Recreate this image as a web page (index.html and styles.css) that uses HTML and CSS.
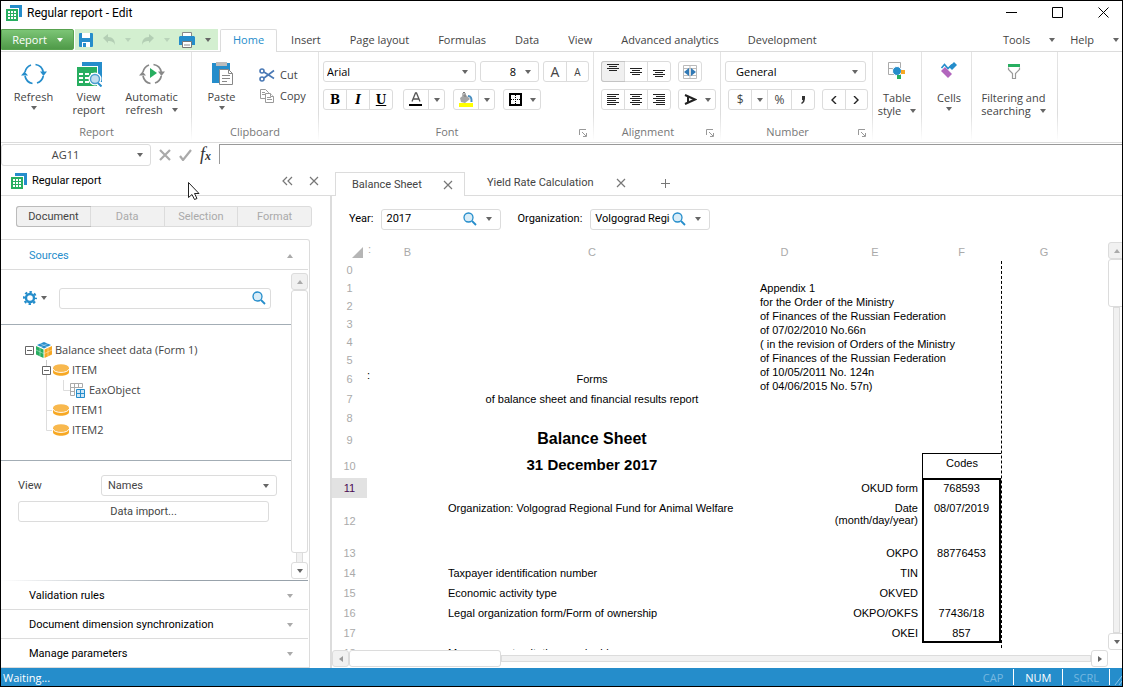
FILE: index.html
```html
<!DOCTYPE html>
<html lang="en">
<head>
<meta charset="utf-8">
<title>Regular report - Edit</title>
<link rel="stylesheet" href="styles.css">
</head>
<body>
<svg class="defs" aria-hidden="true">
  <symbol id="i-report" viewBox="0 0 16 16"><path d="M4 0h12v12h-3V3H4z" fill="#258dcb"/><path d="M0 4h12v12H0z" fill="#27ae60"/><path d="M2 6h2v2H2zM5 6h2v2H5zM8 6h2v2H8zM2 9h2v2H2zM5 9h2v2H5zM8 9h2v2H8zM2 12h2v2H2zM5 12h2v2H5zM8 12h2v2H8z" fill="#fff"/></symbol>
  <symbol id="i-x" viewBox="0 0 10 10"><path d="M1 1l8 8M9 1L1 9" stroke="currentColor" stroke-width="1.2" fill="none"/></symbol>
  <symbol id="i-lens" viewBox="0 0 14 14"><circle cx="5.5" cy="5.5" r="4.5" fill="#d9edf8" stroke="#258dcb" stroke-width="1.3"/><path d="M9 9l4 4" stroke="#258dcb" stroke-width="1.8"/></symbol>
  <symbol id="i-cycle" viewBox="0 0 26 24"><g fill="none" stroke="currentColor" stroke-width="1.7"><path d="M4 10a9.5 9.5 0 0 1 6-7M14.500 2.500A9.500 9.500 0 0 1 22.300 10M22.300 14A9.500 9.500 0 0 1 16 21M11.500 21.500A9.500 9.500 0 0 1 4 14"/></g><path d="M19 9.500h7l-3.500 4.500zM0 13.500h7L3.500 9.500z" fill="currentColor"/></symbol>
  <symbol id="i-disk" viewBox="0 0 16 12"><path d="M0 4v4c0 5 16 5 16 0V4z" fill="#f7a823"/><ellipse cx="8" cy="4" rx="8" ry="3.800" fill="#f8b84e"/><path d="M0 5c1 4.500 15 4.500 16 0" fill="none" stroke="#fff" stroke-width="1"/></symbol>
  <symbol id="i-launch" viewBox="0 0 8 8"><path d="M.5 6V.5H7M3 3l4 4M7.500 4v3.500H4" fill="none" stroke="#999"/></symbol>
</svg>

<div class="window">
  <header class="title">
    <svg class="i16"><use href="#i-report"/></svg>
    <h1>Regular report - Edit</h1>
    <div class="winbtns">
      <button aria-label="Minimize"><svg width="11" height="11"><path d="M0 5.500h11" stroke="#000"/></svg></button>
      <button aria-label="Maximize"><svg width="11" height="11"><path d="M.5.5h10v10H.5z" fill="none" stroke="#000"/></svg></button>
      <button aria-label="Close"><svg width="11" height="11"><path d="M.5.5l10 10M10.500.5l-10 10" stroke="#000"/></svg></button>
    </div>
  </header>

  <nav class="menu">
    <button class="file">Report <i class="caret"></i></button>
    <div class="quick">
      <button aria-label="Save"><svg width="14" height="14"><path d="M0 1q0-1 1-1h12q1 0 1 1v12q0 1-1 1H1q-1 0-1-1z" fill="#258dcb"/><path d="M3 0h8v5H3zM3 9h8v5H3z" fill="#fff"/><path d="M4 10h3v4H4z" fill="#258dcb"/></svg></button>
      <button aria-label="Undo"><svg width="13" height="12"><path d="M0 4l5-4v3c5 0 7 3 7 8-1-3-3-4-7-4v2z" fill="#b3ceb4"/></svg></button>
      <i class="caret pale"></i>
      <button aria-label="Redo"><svg width="13" height="12"><path d="M13 4L8 0v3c-5 0-7 3-7 8 1-3 3-4 7-4v2z" fill="#b3ceb4"/></svg></button>
      <i class="caret pale"></i>
      <button aria-label="Print"><svg width="16" height="16"><path d="M3.500.5h9v5h-9z" fill="#fff" stroke="#888"/><path d="M1 4h14l1 1v8H0V5z" fill="#258dcb"/><path d="M3.500 9.500h9v6h-9z" fill="#fff" stroke="#777"/><path d="M5 13h6" stroke="#888"/></svg></button>
      <i class="caret"></i>
    </div>
    <a class="tab on" href="#home">Home</a>
    <a class="tab" href="#insert">Insert</a>
    <a class="tab" href="#page">Page layout</a>
    <a class="tab" href="#formulas">Formulas</a>
    <a class="tab" href="#data">Data</a>
    <a class="tab" href="#view">View</a>
    <a class="tab" href="#analytics">Advanced analytics</a>
    <a class="tab" href="#development">Development</a>
    <div class="right"><button>Tools <i class="caret"></i></button><button>Help <i class="caret"></i></button></div>
  </nav>

  <div class="ribbon">
    <section class="group g-report">
      <div class="tools big-row">
        <button class="big b-refresh"><svg class="ico blue" width="26" height="24"><use href="#i-cycle"/></svg><span>Refresh</span><i class="caret"></i></button>
        <button class="big b-view"><svg class="ico" width="26" height="26"><path d="M6 1h20v20h-4V5H6z" fill="#258dcb"/><path d="M1 6h20v19H1z" fill="#27ae60"/><path d="M3 12h4v2H3zM9 12h4v2H9zM15 12h4v2h-4zM3 16h4v2H3zM9 16h4v2H9zM3 20h4v2H3zM9 20h4v2H9z" fill="#fff"/><circle cx="19" cy="18" r="5" fill="#c3def0" stroke="#fff" stroke-width="3"/><circle cx="19" cy="18" r="4.500" fill="#c3def0" stroke="#4a9dcf" stroke-width="1.400"/><path d="M22 22l3.500 3.500" stroke="#258dcb" stroke-width="2"/></svg><span>View<br>report</span></button>
        <button class="big b-auto"><svg class="ico gray" width="26" height="24"><use href="#i-cycle"/><path d="M11 7l7 5-7 5z" fill="#27ae60"/></svg><span>Automatic</span><span class="more">refresh<i class="caret"></i></span></button>
      </div>
      <h2>Report</h2>
    </section>

    <section class="group g-clip">
      <div class="tools big-row">
        <button class="big b-paste"><svg class="ico" width="22" height="24"><path d="M1 2h18v20H1z" fill="#258dcb"/><path d="M5 1h11v4H5z" fill="#bbb"/><path d="M8.500 8.500h9l4 4v11h-13z" fill="#fff" stroke="#888"/><path d="M17.500 8.500v4h4M11 14.500h8M11 17.500h8M11 20.500h5" fill="none" stroke="#888"/></svg><span>Paste</span><i class="caret"></i></button>
        <div class="stack">
          <button><svg width="16" height="14"><g fill="none" stroke="#4a79b5" stroke-width="1.600"><circle cx="3" cy="3" r="2"/><circle cx="3" cy="11" r="2"/><path d="M5 4l10 6.500M5 10l10-7.500"/></g></svg>Cut</button>
          <button><svg width="16" height="14"><g fill="#fff" stroke="#9a9a9a"><path d="M1.500.5h5l3 3v6h-8z"/><path d="M6.500 4.500h5l3 3v6h-8z"/><path d="M8 8.500h4M8 10.500h5M3 3.500h3M3 5.500h3M11.500 4.500v3h3"/></g></svg>Copy</button>
        </div>
      </div>
      <h2>Clipboard</h2>
    </section>

    <section class="group g-font dialog">
      <div class="tools lines">
        <div class="line">
          <span class="sel w-font"><select aria-label="Font"><option>Arial</option></select></span>
          <span class="sel w-size"><select aria-label="Font size"><option>8</option></select></span>
          <span class="btns"><button class="fa" aria-label="Increase font">A</button><button class="fa small" aria-label="Decrease font">A</button></span>
        </div>
        <div class="line">
          <span class="btns w-biu"><button class="serif"><b>B</b></button><button class="serif"><b><i>I</i></b></button><button class="serif"><b><u>U</u></b></button></span>
          <span class="btns w-drop"><button aria-label="Font color"><svg width="14" height="15"><path d="M3 9.500L6.500 1h1L11 9.500M4 7h6" fill="none" stroke="#555" stroke-width="1.300"/><path d="M0 12h13v2H0z" fill="#000"/></svg></button><button class="dd" aria-label="Color list"><i class="caret"></i></button></span>
          <span class="btns w-drop"><button aria-label="Fill color"><svg width="15" height="15"><path d="M1 6l5-4 5 5-5 4-4-1z" fill="#a5a5a5"/><path d="M4 4V1q1-2 2 0v4" fill="none" stroke="#777"/><path d="M9 4q4 0 3.500 6" fill="none" stroke="#4a8fc0" stroke-width="2"/><path d="M0 11h14v4H0z" fill="#ff0"/></svg></button><button class="dd" aria-label="Fill list"><i class="caret"></i></button></span>
          <span class="btns w-bord"><button aria-label="Borders"><svg width="13" height="13"><path d="M1 1h11v11H1z" fill="none" stroke="#000" stroke-width="2"/><path d="M6.500 2v9M2 6.500h9" stroke="#000" stroke-dasharray="1 1"/></svg><i class="caret"></i></button></span>
        </div>
      </div>
      <h2>Font</h2><button class="launch" aria-label="Font dialog"><svg width="8" height="8"><use href="#i-launch"/></svg></button>
    </section>

    <section class="group g-align dialog">
      <div class="tools lines">
        <div class="line">
          <span class="btns w-al"><button class="on up" aria-label="Top"><svg width="12" height="8"><path d="M0 .5h12M2 2.500h8M0 4.500h12M2 6.500h8" stroke="#222"/></svg></button><button aria-label="Middle"><svg width="12" height="8"><path d="M0 .5h12M2 2.500h8M0 4.500h12M2 6.500h8" stroke="#222"/></svg></button><button class="down" aria-label="Bottom"><svg width="12" height="8"><path d="M0 .5h12M2 2.500h8M0 4.500h12M2 6.500h8" stroke="#222"/></svg></button></span>
          <span class="btns w-merge"><button aria-label="Merge"><svg width="14" height="14"><path d="M.5.5h13v13H.5zM7 .5v13M.5 3.500h13M.5 10.500h13" fill="none" stroke="#bbb"/><path d="M6 3v8L1 7zM8 3v8l5-4z" fill="#3179b5"/></svg></button></span>
        </div>
        <div class="line">
          <span class="btns w-al"><button aria-label="Left"><svg width="13" height="11"><path d="M0 .5h12M0 2.500h9M0 4.500h12M0 6.500h9M0 8.500h12M0 10.500h9" stroke="#222"/></svg></button><button aria-label="Center"><svg width="12" height="11"><path d="M0 .5h12M2 2.500h8M0 4.500h12M2 6.500h8M0 8.500h12M2 10.500h8" stroke="#222"/></svg></button><button aria-label="Right"><svg width="12" height="11"><path d="M0 .5h12M3 2.500h9M0 4.500h12M3 6.500h9M0 8.500h12M3 10.500h9" stroke="#222"/></svg></button></span>
          <span class="btns w-bord"><button aria-label="Rotate text"><svg width="13" height="11"><path d="M1 1l10 4.500L1 10M4 2.500v6" fill="none" stroke="#222" stroke-width="2"/></svg><i class="caret"></i></button></span>
        </div>
      </div>
      <h2>Alignment</h2><button class="launch" aria-label="Alignment dialog"><svg width="8" height="8"><use href="#i-launch"/></svg></button>
    </section>

    <section class="group g-num dialog">
      <div class="tools lines">
        <div class="line"><span class="sel w-num"><select aria-label="Number format"><option>General</option></select></span></div>
        <div class="line ind">
          <span class="btns w-fmt"><button>$</button><button class="dd" aria-label="Currency list"><i class="caret"></i></button><button>%</button><button aria-label="Thousands separator"><svg width="6" height="8"><path d="M2 0h3v3q0 3-3 5l-1-1q2-1 2-3H2z" fill="#333"/></svg></button></span>
          <span class="btns w-dec"><button aria-label="Fewer decimals"><svg width="6" height="8"><path d="M5 0L1 4l4 4" fill="none" stroke="#222" stroke-width="1.400"/></svg></button><button aria-label="More decimals"><svg width="6" height="8"><path d="M1 0l4 4-4 4" fill="none" stroke="#222" stroke-width="1.400"/></svg></button></span>
        </div>
      </div>
      <h2>Number</h2><button class="launch" aria-label="Number dialog"><svg width="8" height="8"><use href="#i-launch"/></svg></button>
    </section>

    <section class="group g-table"><button class="big mid"><svg class="ico" width="18" height="18"><path d="M.5.5h12v12H.5zM.5 6.500h12" fill="none" stroke="#aaa"/><circle cx="9" cy="9" r="4.500" fill="#258dcb" stroke="#fff"/><path d="M13 8h4v4h-4z" fill="#f7a823"/><path d="M9 13h4v4H9z" fill="#27ae60"/></svg><span>Table</span><span class="more">style<i class="caret"></i></span></button></section>
    <section class="group g-cells"><button class="big mid"><svg class="ico" width="18" height="18"><path d="M1.500 6l3-3.500 3.500 4 4-4" fill="none" stroke="#258dcb" stroke-width="1.600"/><path d="M9 5l5-5 3 3-5 5z" fill="#258dcb"/><path d="M1 9l4-4 7 7-4 4z" fill="#b266bd"/></svg><span>Cells</span><i class="caret"></i></button></section>
    <section class="group g-filter"><button class="big mid"><svg class="ico" width="16" height="18"><path d="M2.500 5.500v2l4 4v5h3v-5l4-4v-2" fill="none" stroke="#999" stroke-width="1.200"/><path d="M2 2h12v3H2z" fill="#27ae60"/></svg><span>Filtering and</span><span class="more">searching<i class="caret"></i></span></button></section>
  </div>

  <div class="formula">
    <div class="namebox"><input aria-label="Cell name" value="AG11"><i class="caret"></i></div>
    <button aria-label="Cancel"><svg width="12" height="12"><path d="M1 1l10 10M11 1L1 11" stroke="#aaa" stroke-width="2.200"/></svg></button>
    <button aria-label="Accept"><svg width="13" height="12"><path d="M1 7l3 4 8-10" fill="none" stroke="#aaa" stroke-width="2.200"/></svg></button>
    <button class="fx" aria-label="Function"><i>f</i><sub>x</sub></button>
    <input class="expr" aria-label="Formula">
  </div>

  <main class="panes">
    <aside class="side">
      <header class="side-head"><svg class="i16"><use href="#i-report"/></svg><h2>Regular report</h2>
        <button aria-label="Collapse"><svg width="11" height="10"><path d="M5 1L1 5l4 4M10 1L6 5l4 4" fill="none" stroke="#777" stroke-width="1.200"/></svg></button>
        <button aria-label="Close panel"><svg width="10" height="10"><use href="#i-x"/></svg></button>
      </header>
      <div class="side-body">
        <div class="segs"><button class="on">Document</button><button disabled>Data</button><button disabled>Selection</button><button disabled>Format</button></div>
        <div class="box">
          <button class="acc open">Sources<i class="caret up"></i></button>
          <div class="scroll">
            <div class="content">
              <div class="find">
                <button class="gear" aria-label="Settings"><svg width="14" height="14"><circle cx="7" cy="7" r="4" fill="none" stroke="#258dcb" stroke-width="2.400"/><circle cx="7" cy="7" r="6" fill="none" stroke="#258dcb" stroke-width="2" stroke-dasharray="2.400 2.312" stroke-dashoffset="1.200"/></svg><i class="caret"></i></button>
                <div class="search"><input aria-label="Search sources"><svg width="14" height="14"><use href="#i-lens"/></svg></div>
              </div>
              <ul class="tree">
                <li><svg class="slot"><path d="M.5 6.500h8v8h-8zM2 10.500h5" fill="none" stroke="#666"/></svg><svg class="i16"><path d="M8 0l7 3-7 3.500L1 3z" fill="#258dcb"/><path d="M0 4l7.500 3.500V16L0 12.500z" fill="#27ae60"/><path d="M16 4L8.500 7.500V16l7.500-3.500z" fill="#f7a823"/><path d="M4 1.500l8 3.500M12 1.500L4 5M4 6v8M0 8l7.500 3.500M12 6v8M16 8l-7.500 3.500" stroke="#fff" stroke-width=".4"/></svg>Balance sheet data (Form 1)</li>
                <li class="l1"><svg class="slot"><path d="M4.500 0v6M4.500 15v5" stroke="#ccc"/><path d="M.5 6.500h8v8h-8zM2 10.500h5" fill="none" stroke="#666"/></svg><svg class="disk"><use href="#i-disk"/></svg>ITEM</li>
                <li class="l2"><svg class="slot"><path d="M4.500 0v10.500H11M-12.500 0v20" fill="none" stroke="#ddd"/></svg><svg class="i16"><path d="M.5 1.500h12v4H.5zM.5 5.500h4v8h-4zM4.500 1.500v4M8.500 1.500v4M.5 9.500h4" fill="none" stroke="#aaa"/><path d="M6.500 7.500h8v8h-8zM10.500 7.500v8M6.500 11.500h8" fill="#cfe6f5" stroke="#258dcb"/></svg>EaxObject</li>
                <li class="l1"><svg class="slot"><path d="M4.500 0v20M4.500 10.500H10" stroke="#ddd"/></svg><svg class="disk"><use href="#i-disk"/></svg>ITEM1</li>
                <li class="l1"><svg class="slot"><path d="M4.500 0v10.500H10" fill="none" stroke="#ddd"/></svg><svg class="disk"><use href="#i-disk"/></svg>ITEM2</li>
              </ul>
              <div class="opts">
                <label for="view">View</label>
                <span class="sel"><select id="view"><option>Names</option></select></span>
                <button class="import">Data import...</button>
              </div>
            </div>
            <div class="vbar"><button class="sb off" aria-label="Scroll up"><i class="caret up"></i></button><div class="thumb"></div><div class="track"></div><button class="sb" aria-label="Scroll down"><i class="caret"></i></button></div>
          </div>
          <button class="acc dark">Validation rules<i class="caret"></i></button>
          <button class="acc">Document dimension synchronization<i class="caret"></i></button>
          <button class="acc">Manage parameters<i class="caret"></i></button>
        </div>
      </div>
    </aside>

    <section class="work">
      <div class="sheets">
        <div class="sheet on"><a href="#balance">Balance Sheet</a><button aria-label="Close sheet"><svg width="10" height="10"><use href="#i-x"/></svg></button></div>
        <div class="sheet"><a href="#yield">Yield Rate Calculation</a><button aria-label="Close sheet"><svg width="10" height="10"><use href="#i-x"/></svg></button></div>
        <button class="add" aria-label="Add sheet"><svg width="11" height="11"><path d="M5.500 1v9M1 5.500h9" stroke="#777"/></svg></button>
      </div>
      <div class="params">
        <label for="year">Year:</label>
        <div class="pick"><input id="year" value="2017"><svg width="14" height="14"><use href="#i-lens"/></svg><i class="caret"></i></div>
        <label for="org">Organization:</label>
        <div class="pick"><input id="org" value="Volgograd Regional Fund"><svg width="14" height="14"><use href="#i-lens"/></svg><i class="caret"></i></div>
      </div>
      <div class="gridwrap">
        <div class="view">
          <table>
            <colgroup><col class="c0"><col class="ca"><col class="cb"><col class="cc"><col class="cd"><col class="ce"><col class="cf"><col class="cg"></colgroup>
            <thead><tr class="h18"><th class="corner"><svg width="11" height="11"><path d="M11 0v11H0z" fill="#b5b5b5"/></svg></th><th class="colon">:</th><th>B</th><th>C</th><th>D</th><th>E</th><th>F</th><th>G</th></tr></thead>
            <tbody>
              <tr class="h18"><th>0</th><td colspan="6"></td><td class="page" rowspan="19"></td></tr>
              <tr class="h18"><th>1</th><td colspan="3"></td><td class="note" rowspan="7" colspan="3">Appendix 1<br>for the Order of the Ministry<br>of Finances of the Russian Federation<br>of 07/02/2010 No.66n<br>( in the revision of Orders of the Ministry<br>of Finances of the Russian Federation<br>of 10/05/2011 No. 124n<br>of 04/06/2015 No. 57n)</td></tr>
              <tr class="h18"><th>2</th><td colspan="3"></td></tr>
              <tr class="h18"><th>3</th><td colspan="3"></td></tr>
              <tr class="h18"><th>4</th><td colspan="3"></td></tr>
              <tr class="h18"><th>5</th><td colspan="3"></td></tr>
              <tr class="h20"><th>6</th><td class="mark">:</td><td></td><td class="ctr">Forms</td></tr>
              <tr class="h20"><th>7</th><td></td><td></td><td class="ctr">of balance sheet and financial results report</td></tr>
              <tr class="h18"><th>8</th><td colspan="6"></td></tr>
              <tr class="h26"><th>9</th><td></td><td></td><td class="ctr head top">Balance Sheet</td><td colspan="3"></td></tr>
              <tr class="h25"><th>10</th><td></td><td></td><td class="ctr head">31 December 2017</td><td></td><td></td><td class="codes">Codes</td></tr>
              <tr class="h20"><th class="cur">11</th><td colspan="4"></td><td class="lab">OKUD form</td><td class="code first">768593</td></tr>
              <tr class="h45"><th>12</th><td></td><td></td><td>Organization: Volgograd Regional Fund for Animal Welfare</td><td></td><td class="lab">Date (month/day/year)</td><td class="code">08/07/2019</td></tr>
              <tr class="h20"><th>13</th><td colspan="4"></td><td class="lab">OKPO</td><td class="code">88776453</td></tr>
              <tr class="h20"><th>14</th><td></td><td></td><td>Taxpayer identification number</td><td></td><td class="lab">TIN</td><td class="code"></td></tr>
              <tr class="h20"><th>15</th><td></td><td></td><td>Economic activity type</td><td></td><td class="lab">OKVED</td><td class="code"></td></tr>
              <tr class="h20"><th>16</th><td></td><td></td><td>Legal organization form/Form of ownership</td><td></td><td class="lab">OKPO/OKFS</td><td class="code">77436/18</td></tr>
              <tr class="h20"><th>17</th><td colspan="4"></td><td class="lab">OKEI</td><td class="code last">857</td></tr>
              <tr class="h20"><th>18</th><td></td><td></td><td>Measurement unit: thousand rubles</td><td colspan="3"></td></tr>
            </tbody>
          </table>
        </div>
        <div class="vbar"><button class="sb off" aria-label="Scroll up"><i class="caret up"></i></button><div class="thumb"></div><div class="track"></div><button class="sb" aria-label="Scroll down"><i class="caret"></i></button></div>
        <div class="hbar"><button class="sb off" aria-label="Scroll left"><i class="caret left"></i></button><div class="thumb"></div><div class="track"></div><button class="sb" aria-label="Scroll right"><i class="caret rt"></i></button></div>
      </div>
    </section>
  </main>

  <footer class="status"><span class="msg">Waiting...</span><span class="key">CAP</span><span class="key on">NUM</span><span class="key">SCRL</span><svg class="grip" width="12" height="18"><path d="M5 17l7-9M9 17l3-4" stroke="#8cc4e6"/></svg></footer>
  <svg class="pointer" width="13" height="20"><path d="M1.500 1.500v15l3.500-3 2.500 5 2.500-1-2.500-5h4.500z" fill="#fff" stroke="#222"/></svg>
</div>
</body>
</html>
```
FILE: styles.css
```css
* { box-sizing: border-box; }
:root { --ui: "Open Sans", "Noto Sans", sans-serif; --ctl: Roboto, "Open Sans", sans-serif; --line: #dcdcdc; }
body { margin: 0; background: #fff; font: 11px/14px var(--ui); color: #444; }
h1, h2 { margin: 0; font-weight: normal; font-size: 11px; }
button, input, select { font: inherit; color: inherit; margin: 0; }
button { padding: 0; border: 0; background: none; display: flex; align-items: center; justify-content: center; }
input, select { border: 0; padding: 0; background: none; outline: 0; min-width: 0; }
a { color: inherit; text-decoration: none; }
svg { display: block; flex: none; }
.defs { position: absolute; width: 0; height: 0; }
.i16 { width: 16px; height: 16px; }
.caret { display: inline-block; flex: none; border: 3px solid transparent; border-top: 4px solid #666; border-bottom: 0; vertical-align: middle; }
.caret.up { border-top: 0; border-bottom: 4px solid #aaa; }
.caret.left { border: 3px solid transparent; border-left: 0; border-right: 4px solid #999; }
.caret.rt { border: 3px solid transparent; border-right: 0; border-left: 4px solid #666; }
.caret.pale { border-top-color: #b9d3ba; }

.window { position: relative; height: 100vh; border: 1px solid #000; display: flex; flex-direction: column; overflow: hidden; }
.title { height: 28px; flex: none; display: flex; align-items: center; padding: 0 13px 5px 5px; gap: 5px; color: #000; font-family: var(--ctl); }
.title h1 { font-size: 12px; flex: 1; }
.winbtns { display: flex; gap: 35px; }

.menu { height: 23px; flex: none; display: flex; border-bottom: 1px solid var(--line); }
.file { width: 73px; height: 21px; gap: 10px; color: #fff; background: linear-gradient(#7cc576, #4f9a48); border: 1px solid #58a24f; border-radius: 0 2px 2px 0; }
.file .caret { border-top-color: #fff; }
.quick { width: 143px; height: 21px; margin: 0 2px 0 1px; padding: 0 7px 0 4px; display: flex; align-items: center; justify-content: space-between; background: #d3efd0; }
.tab { padding: 4px 15px 0 14px; height: 22px; }
.tab.on { height: 23px; padding: 3px 12px 0; border: 1px solid var(--line); border-bottom: 0; border-radius: 2px 2px 0 0; background: #fff; color: #258dcb; }
.right { margin-left: auto; display: flex; align-items: center; gap: 15px; padding-right: 3px; }
.right button { gap: 19px; }

.ribbon { height: 91px; flex: none; display: flex; border-bottom: 1px solid var(--line); }
.group { position: relative; flex: none; border-right: 1px solid; border-image: linear-gradient(#e4e4e4, #ddd 70%, #fff) 1; height: 88px; }
.group > h2 { text-align: center; color: #777; line-height: 16px; }
.dialog > h2 { padding-right: 18px; }
.tools { height: 72px; }
.big-row { display: flex; }
.big { flex-direction: column; justify-content: flex-start; line-height: 13px; padding-top: 9px; text-align: center; }
.big .ico { height: 26px; margin-bottom: 3px; }
.big > .caret { margin-top: 3px; }
.big.mid { width: 100%; padding-top: 10px; }
.more { display: flex; align-items: center; gap: 9px; }
.blue { color: #258dcb; }
.gray { color: #888; }
.g-report { width: 191px; padding-left: 1px; }
.b-refresh { width: 64px; }
.b-view { width: 48px; }
.b-auto { width: 80px; }
.g-clip { width: 127px; }
.b-paste { width: 59px; }
.stack { padding: 16px 0 0 8px; display: flex; flex-direction: column; gap: 7px; align-items: flex-start; }
.stack button { gap: 5px; }
.g-font { width: 275px; }
.g-align { width: 127px; }
.g-num { width: 152px; }
.g-table { width: 49px; }
.g-cells { width: 50px; padding-left: 5px; }
.g-filter { width: 86px; padding-right: 2px; }
.lines { display: flex; flex-direction: column; gap: 7px; padding: 9px 0 0 4px; }
.g-align .lines { padding-left: 7px; }
.line { display: flex; gap: 4px; }
.line + .line { gap: 8px; }
.g-align .line, .g-align .line + .line { gap: 7px; }
.g-num .ind { padding-left: 3px; gap: 7px; }
.sel { position: relative; display: flex; height: 21px; border: 1px solid var(--line); border-radius: 3px; color: #000; background: #fff; }
.sel select { appearance: none; width: 100%; padding: 0 20px 0 3px; }
.sel::after { content: ""; position: absolute; right: 7px; top: 8px; border: 3px solid transparent; border-top: 4px solid #666; border-bottom: 0; pointer-events: none; }
.w-font { width: 153px; }
.w-size { width: 59px; }
.w-size select { text-align: right; text-align-last: right; padding-right: 22px; }
.w-num { width: 141px; }
.w-num select { padding-left: 10px; }
.btns { display: flex; height: 21px; border: 1px solid var(--line); border-radius: 3px; }
.btns button { flex: 1; gap: 8px; }
.btns button + button { border-left: 1px solid var(--line); }
.btns .dd { flex: 0 0 16px; }
.btns .on { background: #f0f0f0; box-shadow: 0 0 0 1px #c4c4c4; border-radius: 2px 0 0 2px; }
.btns .up { padding-bottom: 7px; }
.btns .down { padding-top: 4px; }
.btns .fa { flex: 0 0 22px; font-size: 14px; }
.btns .fa.small { font-size: 10px; }
.serif { font: 12px "DejaVu Serif", serif; color: #000; }
.w-biu, .w-al { width: 70px; }
.w-biu { margin-right: 2px; }
.w-drop { width: 42px; }
.w-bord { width: 38px; }
.w-merge { width: 24px; }
.w-fmt { width: 87px; font-size: 12px; }
.w-dec { width: 46px; }
.launch { position: absolute; right: 6px; bottom: 3px; }

.formula { height: 23px; flex: none; display: flex; align-items: flex-start; gap: 8px; padding-top: 1px; }
.namebox { display: flex; align-items: center; width: 150px; height: 22px; border: 1px solid var(--line); border-radius: 3px; padding-right: 7px; }
.namebox input { flex: 1; text-align: center; padding-right: 8px; }
.formula button { height: 21px; }
.fx { color: #333; font: 18px "Liberation Serif", serif; align-items: baseline; }
.fx sub { font: bold italic 12px "Liberation Serif", serif; }
.expr { flex: 1; height: 20px; border: solid #999; border-width: 1px 0 0 1px; }

.panes { flex: 1; min-height: 0; display: grid; grid-template-columns: 331px minmax(0, 1fr); font-family: var(--ctl); }
.side { display: flex; flex-direction: column; min-height: 0; }
.side-head { height: 30px; flex: none; display: flex; align-items: center; gap: 16px; padding: 0 13px 0 10px; border-bottom: 1px solid var(--line); color: #777; }
.side-head h2 { flex: 1; margin-left: -11px; color: #000; }
.side-body { flex: 1; min-height: 0; display: flex; flex-direction: column; padding: 10px 20px 0 0; border-right: 2px solid var(--line); }
.segs { display: flex; height: 21px; flex: none; width: 296px; margin-left: 15px; border: 1px solid var(--line); border-radius: 3px; background: #f1f1f1; color: #aaa; }
.segs button { flex: 1; color: inherit; border-left: 1px solid var(--line); }
.segs .on { color: #444; border: 0; box-shadow: 0 0 0 1px #bbb; border-radius: 2px 0 0 2px; }
.box { flex: 1; min-height: 0; margin-top: 12px; display: flex; flex-direction: column; border: solid var(--line); border-width: 1px 1px 1px 0; border-radius: 0 3px 0 0; padding-right: 1px; }
.acc { height: 29px; flex: none; justify-content: space-between; padding: 2px 15px 0 28px; color: #000; border-top: 1px solid var(--line); }
.acc .caret { border-top-color: #aaa; }
.acc.open { height: 30px; border-top: 0; border-bottom: 1px solid var(--line); color: #258dcb; }
.acc.open .caret { border-top: 0; }
.acc.dark { border-image: linear-gradient(90deg, #fff, #98a2ab 60%) 1; }
.scroll { flex: 1; min-height: 0; display: flex; }
.content { flex: 1; min-width: 0; overflow: hidden; }
.find { display: flex; align-items: center; gap: 12px; height: 55px; padding: 2px 20px 0 22px; border-bottom: 1px solid #a3adb5; }
.gear { gap: 4px; }
.search { flex: 1; display: flex; align-items: center; height: 21px; padding: 0 4px; border: 1px solid var(--line); border-radius: 3px; }
.search input { flex: 1; }
.tree { list-style: none; margin: 0; padding: 15px 0 20px 24px; border-bottom: 1px solid #a3adb5; font-family: var(--ui); }
.tree li { height: 20px; display: flex; align-items: center; }
.tree .l1 { padding-left: 17px; }
.tree .l2 { padding-left: 34px; }
.slot { width: 9px; height: 20px; margin-right: 2px; overflow: visible; }
.slot + svg { margin-right: 3px; }
.disk { width: 16px; height: 12px; }
.opts { display: grid; grid-template-columns: 83px 1fr; row-gap: 5px; align-items: center; padding: 14px 14px 0 17px; color: #444; }
.opts .sel { color: #444; }
.opts .sel select { padding-left: 6px; }
.import { grid-column: 1 / -1; height: 21px; margin-right: 8px; border: 1px solid var(--line); border-radius: 3px; }
.vbar { width: 17px; flex: none; display: flex; flex-direction: column; align-items: center; padding: 3px 0 1px; }
.sb { width: 17px; height: 17px; flex: none; border: 1px solid var(--line); border-radius: 3px; background: #fff; }
.sb.off { background: #f1f1f1; }
.thumb { background: #fff; border: 1px solid var(--line); border-radius: 3px; flex: none; }
.track { background: #f1f1f1; border: 1px solid var(--line); flex: 1; }
.vbar .thumb { width: 17px; }
.vbar .track { width: 7px; }
.side .thumb { flex: 1; }
.side .track { flex: 0 0 9px; border-width: 0 1px; }

.work { display: flex; flex-direction: column; min-width: 0; min-height: 0; }
.sheets { height: 30px; flex: none; display: flex; align-items: flex-end; padding-left: 3px; border-bottom: 1px solid var(--line); color: #777; }
.sheet { display: flex; align-items: center; height: 24px; gap: 22px; padding: 0 11px 0 22px; }
.sheet a { color: #444; }
.sheet.on { width: 130px; justify-content: space-between; gap: 0; padding-left: 16px; border: 1px solid var(--line); border-bottom: 0; background: #fff; margin-bottom: -1px; }
.add { height: 24px; margin-left: 23px; }
.params { height: 46px; flex: none; display: flex; align-items: center; padding: 0 17px; color: #000; }
.pick { display: flex; align-items: center; width: 120px; height: 21px; margin: 0 16px 0 8px; padding: 0 8px 0 4px; border: 1px solid var(--line); border-radius: 3px; }
.pick input { flex: 1; }
.pick svg { margin-left: 2px; }
.pick .caret { margin-left: 9px; }
.gridwrap { flex: 1; min-height: 0; display: grid; grid-template: minmax(0, 1fr) 18px / minmax(0, 1fr) 14px; }
.view { overflow: hidden; }
.gridwrap .vbar { width: 17px; padding: 0; }
.gridwrap .vbar .thumb { height: 48px; }
.hbar { display: flex; align-items: center; height: 17px; }
.hbar .thumb { width: 152px; height: 17px; }
.hbar .track { height: 7px; }

table { border-collapse: separate; border-spacing: 0; table-layout: fixed; width: 755px; margin-top: 1px; font: 11px/12px "Liberation Sans", Arial, sans-serif; color: #000; }
.c0 { width: 35px; }
.ca { width: 5px; }
.cb { width: 71px; }
.cc { width: 298px; }
.cd { width: 87px; }
.ce { width: 94px; }
.cf { width: 79px; }
.cg { width: 86px; }
th { padding: 0; font-weight: normal; color: #aaa; }
td { padding: 4px 5px; vertical-align: top; white-space: nowrap; }
.h18 { height: 18px; }
.h20 { height: 20px; }
.h25 { height: 25px; }
.h26 { height: 26px; }
.h45 { height: 45px; }
th.corner { text-align: right; }
.corner svg { margin-left: 20px; }
.colon, td.mark { padding: 0; vertical-align: top; }
.cur { background: #e2e2e2; color: #4b0a55; }
.note { padding: 2px 19px; line-height: 14px; }
.ctr { text-align: center; }
.head { font-size: 15px; line-height: 18px; font-weight: bold; padding-top: 3px; }
.head.top { font-size: 16px; }
.lab { text-align: right; white-space: normal; padding-left: 0; padding-right: 4px; }
.codes { text-align: center; padding-top: 3px; border: 1px solid #000; border-width: 1px 0 0 1px; }
.code { text-align: center; padding-left: 2px; padding-right: 2px; border: solid #000; border-width: 0 2px; }
.first { border-top-width: 2px; padding-top: 2px; }
.last { border-bottom-width: 2px; padding-bottom: 2px; }
.page { border-left: 1px dashed #000; }

.status { height: 18px; flex: none; display: flex; align-items: center; padding-left: 2px; background: #258dcb; color: #fff; }
.msg { flex: 1; padding-top: 2px; }
.key { height: 16px; line-height: 18px; padding: 0 10px 0 11px; border-right: 1px solid #fff; color: #76b8e0; }
.key.on { color: #fff; }
.pointer { position: absolute; left: 186px; top: 180px; }
```
